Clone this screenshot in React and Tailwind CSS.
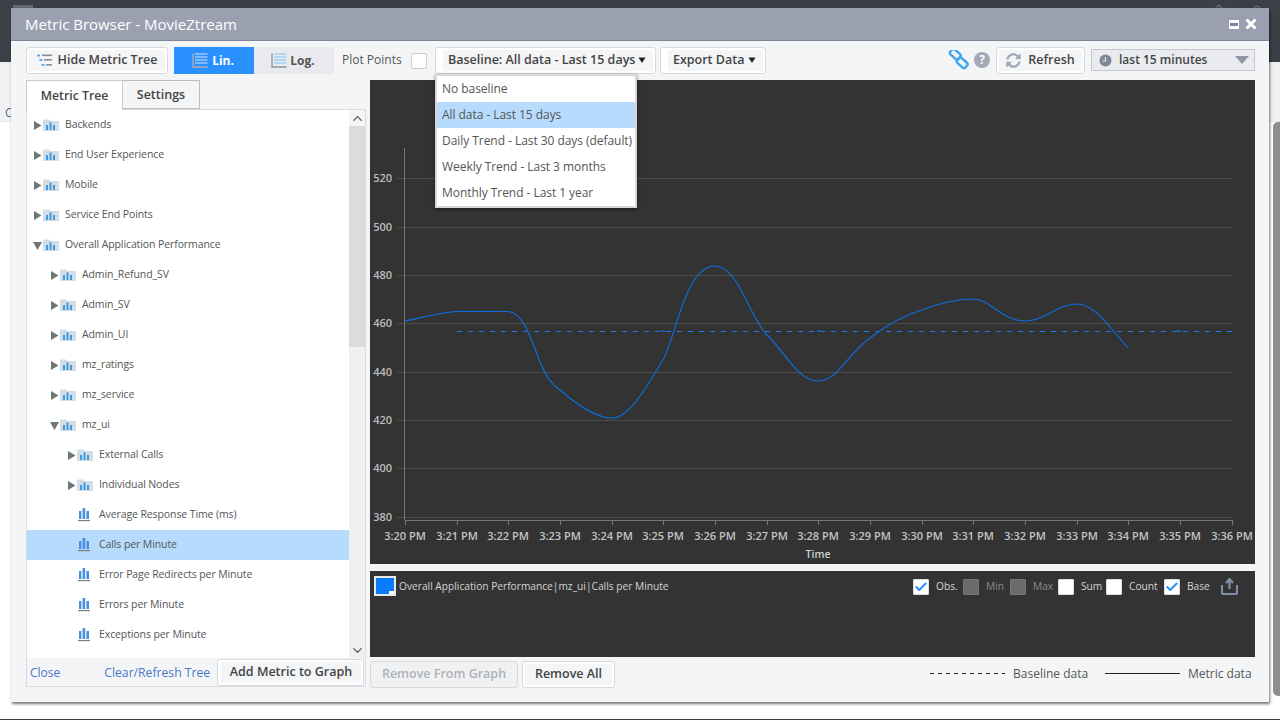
import React from 'react';
import { ChevronUp, ChevronDown, Check, Settings, User } from 'lucide-react';
import { FaSyncAlt } from 'react-icons/fa';

const font = { fontFamily: '"Open Sans", "Noto Sans", sans-serif' };

const levelPad = { 0: 'pl-[6px]', 1: 'pl-[23px]', 2: 'pl-[40px]', 3: 'pl-[51px]' };

const treeRows = [
  { label: 'Backends', level: 0, type: 'closed' },
  { label: 'End User Experience', level: 0, type: 'closed' },
  { label: 'Mobile', level: 0, type: 'closed' },
  { label: 'Service End Points', level: 0, type: 'closed' },
  { label: 'Overall Application Performance', level: 0, type: 'open' },
  { label: 'Admin_Refund_SV', level: 1, type: 'closed' },
  { label: 'Admin_SV', level: 1, type: 'closed' },
  { label: 'Admin_UI', level: 1, type: 'closed' },
  { label: 'mz_ratings', level: 1, type: 'closed' },
  { label: 'mz_service', level: 1, type: 'closed' },
  { label: 'mz_ui', level: 1, type: 'open' },
  { label: 'External Calls', level: 2, type: 'closed' },
  { label: 'Individual Nodes', level: 2, type: 'closed' },
  { label: 'Average Response Time (ms)', level: 3, type: 'leaf' },
  { label: 'Calls per Minute', level: 3, type: 'leaf', selected: true },
  { label: 'Error Page Redirects per Minute', level: 3, type: 'leaf' },
  { label: 'Errors per Minute', level: 3, type: 'leaf' },
  { label: 'Exceptions per Minute', level: 3, type: 'leaf' },
];

const baselineOptions = [
  'No baseline',
  'All data - Last 15 days',
  'Daily Trend - Last 30 days (default)',
  'Weekly Trend - Last 3 months',
  'Monthly Trend - Last 1 year',
];

const yTicks = [
  [520, 178], [500, 227], [480, 275], [460, 323],
  [440, 372], [420, 420], [400, 468], [380, 517],
];

const xTicks = [
  ['3:20 PM', 405], ['3:21 PM', 457], ['3:22 PM', 508], ['3:23 PM', 560],
  ['3:24 PM', 612], ['3:25 PM', 663], ['3:26 PM', 715], ['3:27 PM', 767],
  ['3:28 PM', 818], ['3:29 PM', 870], ['3:30 PM', 922], ['3:31 PM', 973],
  ['3:32 PM', 1025], ['3:33 PM', 1077], ['3:34 PM', 1128], ['3:35 PM', 1180],
  ['3:36 PM', 1232],
];

const legendItems = [
  { label: 'Obs.', width: 'w-[50px]', checked: true },
  { label: 'Min', width: 'w-[47px]', disabled: true },
  { label: 'Max', width: 'w-[48px]', disabled: true },
  { label: 'Sum', width: 'w-[48px]' },
  { label: 'Count', width: 'w-[58px]' },
  { label: 'Base', width: 'w-[56px]', checked: true },
];

const curve =
  'M405 321 C425 317 442 312 457 311.5 L508 311.5 C522 312 530 335 540 362 C547 378 552 385 560 390 C575 403 595 418 612 418 C630 418 648 384 663 360 C675 340 685 266 715 266 C738 266 750 318 767 335 C785 352 798 381 818 381 C838 381 848 353 870 338 C888 324 905 315 922 310 C940 303 958 299 973 299 C990 299 1002 321 1025 321 C1045 321 1058 304 1077 304 C1095 304 1110 328 1128 348';

function Arrow({ open }) {
  return open ? (
    <svg width="9" height="9" viewBox="0 0 9 9" className="shrink-0">
      <path d="M0 1 H9 L4.5 9 Z" fill="#6f7676" />
    </svg>
  ) : (
    <svg width="9" height="9" viewBox="0 0 9 9" className="shrink-0">
      <path d="M1 0 V9 L8.5 4.5 Z" fill="#6f7676" />
    </svg>
  );
}

function FolderIcon() {
  return (
    <svg width="16" height="12" viewBox="0 0 16 12" className="shrink-0">
      <path d="M0 1.5 Q0 0.5 1 0.5 H6 L7.5 2 H16 V12 H0 Z" fill="#d3dde6" />
      <rect x="3" y="6" width="2" height="5" fill="#3b9ae1" />
      <rect x="6.5" y="3.5" width="2" height="7.5" fill="#3b9ae1" />
      <rect x="10" y="6" width="2" height="5" fill="#3b9ae1" />
    </svg>
  );
}

function BarsIcon() {
  return (
    <svg width="12" height="14" viewBox="0 0 12 14" className="shrink-0">
      <rect x="1" y="3" width="2.4" height="8" fill="#4a90e2" />
      <rect x="4.6" y="0" width="2.6" height="11" fill="#4a90e2" />
      <rect x="8.4" y="3" width="2.6" height="8" fill="#4a90e2" />
      <rect x="0" y="12" width="12" height="1.2" fill="#7b8087" />
    </svg>
  );
}

function ScaleIcon({ line, frame }) {
  return (
    <svg width="16" height="15" viewBox="0 0 16 15" className="shrink-0">
      <path d="M1 0.5 V14 H15.5" fill="none" stroke={frame} strokeWidth="1.8" />
      <path d="M3 1 H15.5 M3 4 H15.5 M3 7 H15.5 M3 10 H15.5" fill="none" stroke={line} strokeWidth="1" />
    </svg>
  );
}

function TreeListIcon() {
  return (
    <svg width="15" height="13" viewBox="0 0 15 13" className="shrink-0">
      <rect x="0" y="0.5" width="3" height="2" fill="#5aaef5" />
      <rect x="5" y="0.5" width="10" height="1.6" fill="#8a8f97" />
      <rect x="2.5" y="5" width="3" height="2" fill="#5aaef5" />
      <rect x="7" y="5" width="8" height="1.6" fill="#8a8f97" />
      <rect x="4.5" y="10" width="3" height="2" fill="#5aaef5" />
      <rect x="9" y="10" width="6" height="1.6" fill="#8a8f97" />
    </svg>
  );
}

function Caret() {
  return (
    <svg width="10" height="7" viewBox="0 0 10 7" className="shrink-0">
      <path d="M1.5 0.5 H8.5 L5 6 Z" fill="#222" />
    </svg>
  );
}

function ToolButton({ className, children, gap = 'gap-[5px]' }) {
  return (
    <div className={`h-[27px] flex items-center justify-center border border-[#d6d9dd] rounded-[3px] bg-white p-[2px] ${className}`}>
      <div className={`w-full h-full flex items-center justify-center ${gap} bg-[#f3f5f7] rounded-[2px] text-[12.5px] font-semibold text-[#444] whitespace-nowrap`}>
        {children}
      </div>
    </div>
  );
}

function TreeRow({ row }) {
  return (
    <div className={`h-[30px] flex items-center shrink-0 ${levelPad[row.level]} ${row.selected ? 'bg-[#b7dbfd]' : ''}`}>
      {row.type === 'leaf' ? (
        <>
          <BarsIcon />
          <span className="ml-[9px] text-[10.5px] tracking-[-0.1px] text-[#555]">{row.label}</span>
        </>
      ) : (
        <>
          <Arrow open={row.type === 'open'} />
          <span className="ml-[1px]"><FolderIcon /></span>
          <span className="ml-[6px] text-[10.5px] tracking-[-0.1px] text-[#555]">{row.label}</span>
        </>
      )}
    </div>
  );
}

function LegendBox({ checked, disabled }) {
  return (
    <span className={`w-4 h-4 shrink-0 flex items-center justify-center rounded-[1px] border ${disabled ? 'bg-[#6b6b6b] border-[#777]' : 'bg-white border-[#ddd]'}`}>
      {checked && <Check size={14} strokeWidth={3.5} className="text-[#2a8fff]" />}
    </span>
  );
}

function Chart() {
  return (
    <svg width="885" height="484" viewBox="370 80 885 484" className="block">
      <rect x="370" y="80" width="885" height="484" fill="#333333" />
      {yTicks.map(([label, y]) => (
        <g key={label}>
          <line x1="397" x2="1232" y1={y + 0.5} y2={y + 0.5} stroke="#4d4d4d" />
          <text x="392" y={y + 3.5} textAnchor="end" fontSize="11" fontWeight="600" fill="#bdbdbd">{label}</text>
        </g>
      ))}
      <line x1="404.5" x2="404.5" y1="148" y2="520" stroke="#777" />
      <line x1="405" x2="1232" y1="520.5" y2="520.5" stroke="#777" />
      {xTicks.map(([label, x]) => (
        <g key={label}>
          <line x1={x + 0.5} x2={x + 0.5} y1="520" y2="525" stroke="#777" />
          <text x={x} y="540" textAnchor="middle" fontSize="11" fontWeight="600" fill="#c4c4c4">{label}</text>
        </g>
      ))}
      <text x="818" y="558" textAnchor="middle" fontSize="10.5" fontWeight="600" fill="#d0d0d0">Time</text>
      <line x1="457" x2="1232" y1="331.5" y2="331.5" stroke="#1a78e6" strokeDasharray="5 6" />
      <rect x="661" y="330" width="4" height="2" fill="#1c5ca8" />
      <rect x="817" y="330" width="4" height="2" fill="#1c5ca8" />
      <rect x="1177" y="330" width="4" height="2" fill="#1c5ca8" />
      <path d={curve} fill="none" stroke="#0b70e3" strokeWidth="1.1" />
    </svg>
  );
}

export default function App() {
  return (
    <div className="relative w-[1280px] h-[720px] overflow-hidden bg-white" style={font}>
      {/* page behind the dialog: only the top of the header peeks out */}
      <div className="h-[62px] bg-[#3c3f48]">
        <div className="h-[8px] overflow-hidden flex items-start pt-[4px] pl-[13px] pr-[14px] text-[#666973]">
          <div className="w-[20px] h-[3px] mt-[1px] bg-[#666973]" />
          <span className="ml-[18px] text-[27px] leading-[30px] tracking-[1px]">APPDYNAMICS</span>
          <span className="ml-auto text-[20px] leading-[22px] font-bold">?</span>
          <Settings size={18} className="ml-[25px]" />
          <User size={18} className="ml-[20px]" />
        </div>
      </div>
      <div className="h-[60px] bg-[#f0f1f3] border-b border-[#e4e6e9]" />
      <div className="absolute left-[5px] top-[104px] text-[12px] text-[#5a6a8a]">C</div>
      <div className="absolute right-0 top-[122px] w-[7px] h-[574px] bg-[#8e8e8e] rounded-l-[5px]" />
      <div className="absolute left-0 right-0 bottom-0 h-[1px] bg-[#3c3f48]" />

      {/* dialog */}
      <div className="absolute left-[11px] top-[8px] w-[1258px] h-[694px] flex flex-col bg-[#f3f5f7] shadow-[1px_2px_3px_rgba(0,0,0,0.55)] rounded-t-[2px]">
        <div className="h-[33px] shrink-0 flex items-center justify-between pl-[14px] pr-[12px] bg-[#9aa0b0] border-b border-[#7f8596]">
          <span className="mt-[1px] text-[15px] text-white">Metric Browser - MovieZtream</span>
          <div className="flex items-center gap-[6px]">
            <span className="w-[10px] h-[9px] bg-white flex items-center justify-center">
              <span className="w-[8px] h-[3px] bg-[#7f8596]" />
            </span>
            <svg width="12" height="12" viewBox="0 0 12 12">
              <path d="M1.5 1.5 L10.5 10.5 M10.5 1.5 L1.5 10.5" stroke="#fff" strokeWidth="3" />
            </svg>
          </div>
        </div>

        {/* toolbar */}
        <div className="h-[39px] shrink-0 flex items-start pt-[6px] pl-[15px] pr-[14px]">
          <ToolButton className="w-[142px]">
            <TreeListIcon />
            <span className="ml-[1px]">Hide Metric Tree</span>
          </ToolButton>
          <div className="ml-[6px] w-[80px] h-[27px] flex items-center justify-center gap-[4px] pr-[2px] bg-[#2a8fff] text-[12px] font-bold text-white">
            <ScaleIcon line="#d5e8ff" frame="#8fa4bf" />
            Lin.
          </div>
          <div className="w-[80px] h-[27px] flex items-center justify-center gap-[3px] pr-[2px] bg-[#e8eaed] text-[12px] font-bold text-[#555]">
            <ScaleIcon line="#7cc0fb" frame="#a5abb5" />
            Log.
          </div>
          <span className="ml-[8px] h-[26px] flex items-center text-[12px] text-[#555]">Plot Points</span>
          <span className="ml-[9px] mt-[6px] w-4 h-4 bg-white border border-[#c9ccd1] rounded-[2px]" />
          <ToolButton className="ml-[8px] w-[221px] pl-[7px]" gap="gap-[2px]">
            Baseline: All data - Last 15 days
            <Caret />
          </ToolButton>
          <ToolButton className="ml-[4px] w-[106px] pl-[7px]" gap="gap-[3px]">
            Export Data
            <Caret />
          </ToolButton>
          <div className="ml-auto flex items-start">
            <svg width="21" height="20" viewBox="0 0 21 20" className="mt-[3px]">
              <g fill="none" stroke="#3ea6f5" strokeWidth="2.4">
                <rect x="1.8" y="-1.5" width="11" height="6.5" rx="2" transform="rotate(42 4 3)" />
                <rect x="8.5" y="9.5" width="11" height="6.5" rx="2" transform="rotate(42 14 13)" />
              </g>
            </svg>
            <span className="ml-[5px] mt-[5px] w-4 h-4 rounded-full bg-[#a3a9b5] flex items-center justify-center text-[12px] font-bold leading-none text-white">?</span>
            <ToolButton className="ml-[6px] w-[89px]">
              <FaSyncAlt size={15} className="text-[#a3a9b5] mr-[2px]" />
              Refresh
            </ToolButton>
            <div className="ml-[6px] mt-[2px] w-[164px] h-[22px] flex items-center pl-[7px] pr-[5px] bg-[#e9ebee] border border-[#c3c7cc]">
              <svg width="13" height="13" viewBox="0 0 13 13" className="shrink-0">
                <circle cx="6.5" cy="6.5" r="6" fill="#7f8694" />
                <path d="M6.5 3 V7 H3.5" fill="none" stroke="#e9ebee" strokeWidth="1.2" />
              </svg>
              <span className="ml-[7px] text-[12px] font-semibold text-[#444]">last 15 minutes</span>
              <svg width="14" height="8" viewBox="0 0 14 8" className="ml-auto">
                <path d="M0 0 H14 L7 8 Z" fill="#8d94a3" />
              </svg>
            </div>
          </div>
        </div>

        {/* main columns */}
        <div className="flex-1 flex pl-[15px] pr-[14px] gap-[4px] min-h-0">
          <div className="w-[340px] shrink-0 flex flex-col">
            <div className="h-[29px] shrink-0 flex items-start relative z-10">
              <div className="w-[97px] h-[30px] pt-[2px] flex items-center justify-center bg-white border border-[#c8cbd0] border-b-0 text-[12.3px] font-semibold text-[#444]">Metric Tree</div>
              <div className="w-[77px] h-[29px] pt-[2px] flex items-center justify-center bg-[#f3f5f7] border border-[#b9bcc1] border-l-0 text-[12.5px] font-semibold text-[#444]">Settings</div>
            </div>
            <div className="flex-1 flex flex-col bg-white border border-[#d8dbdf] mb-[15px] min-h-0">
              <div className="h-[548px] shrink-0 flex">
                <div className="flex-1 flex flex-col overflow-hidden">
                  {treeRows.map((row) => (
                    <TreeRow key={row.label} row={row} />
                  ))}
                </div>
                <div className="w-[16px] shrink-0 flex flex-col bg-[#f0f0f0]">
                  <div className="h-[16px] flex items-center justify-center bg-[#f5f5f5]">
                    <ChevronUp size={15} className="text-[#555]" />
                  </div>
                  <div className="h-[221px] bg-[#dcdcdc]" />
                  <div className="mt-auto h-[16px] flex items-center justify-center">
                    <ChevronDown size={15} className="text-[#555]" />
                  </div>
                </div>
              </div>
              <div className="flex-1 flex items-center bg-[#f3f5f7] pl-[3px] pr-[1px]">
                <span className="mt-[1px] text-[12px] text-[#4a76c9]">Close</span>
                <span className="ml-[44px] mt-[2px] text-[12.2px] text-[#4a76c9]">Clear/Refresh Tree</span>
                <ToolButton className="ml-auto mt-[1px] w-[147px] pl-[3px]">Add Metric to Graph</ToolButton>
              </div>
            </div>
          </div>

          <div className="flex-1 flex flex-col min-w-0">
            <Chart />
            <div className="mt-[7px] h-[86px] shrink-0 bg-[#333333] flex items-start pt-[5px] pl-[4px] pr-[16px]">
              <span className="relative w-[22px] h-[20px] bg-[#0a7bff] border-2 border-[#e6e8ea] shrink-0">
                <span className="absolute right-0 bottom-0 w-[5px] h-[3px] bg-white" />
              </span>
              <span className="ml-[3px] mt-[3px] text-[10.2px] text-[#d4d4d4]">Overall Application Performance|mz_ui|Calls per Minute</span>
              <div className="ml-auto mt-[2px] flex items-center text-[10.2px] text-[#d4d4d4]">
                {legendItems.map((item) => (
                  <div key={item.label} className={`flex items-center ${item.width}`}>
                    <LegendBox checked={item.checked} disabled={item.disabled} />
                    <span className={`ml-[7px] ${item.disabled ? 'text-[#8a8a8a]' : ''}`}>{item.label}</span>
                  </div>
                ))}
                <svg width="19" height="17" viewBox="0 0 19 17">
                  <path d="M2 7 V15 Q2 16 3 16 H16 Q17 16 17 15 V7" fill="none" stroke="#8090a8" strokeWidth="2" />
                  <path d="M9.5 11 V3 M6 5 L9.5 1 L13 5" fill="none" stroke="#8090a8" strokeWidth="2.2" />
                </svg>
              </div>
            </div>
            <div className="mt-[4px] flex items-center">
              <div className="w-[148px] h-[27px] flex items-center justify-center border border-[#d6d9dd] rounded-[3px] text-[12.5px] font-semibold text-[#aeb1b5] bg-[#f0f1f3]">Remove From Graph</div>
              <ToolButton className="ml-[4px] w-[93px]">Remove All</ToolButton>
              <svg width="75" height="1" viewBox="0 0 75 1" className="ml-auto mb-[2px]">
                <line x1="0" x2="75" y1="0.5" y2="0.5" stroke="#222" strokeDasharray="4 4" />
              </svg>
              <span className="ml-[8px] w-[74px] mb-[2px] text-[12px] text-[#555] whitespace-nowrap">Baseline data</span>
              <svg width="75" height="1" viewBox="0 0 75 1" className="ml-[18px] mb-[2px]">
                <line x1="0" x2="75" y1="0.5" y2="0.5" stroke="#222" />
              </svg>
              <span className="ml-[8px] mr-[3px] w-[64px] mb-[2px] text-[12px] text-[#555] whitespace-nowrap">Metric data</span>
            </div>
          </div>
        </div>

        {/* baseline menu */}
        <div className="absolute left-[424px] top-[66px] w-[202px] flex flex-col bg-white border-2 border-[#d8d8d8] shadow-[0_1px_3px_rgba(0,0,0,0.5)] z-20">
          {baselineOptions.map((opt, i) => (
            <div key={opt} className={`h-[26px] flex items-center pl-[5px] text-[12px] tracking-[-0.05px] text-[#555] whitespace-nowrap ${i === 1 ? 'bg-[#b7dbfd]' : ''}`}>
              {opt}
            </div>
          ))}
        </div>
      </div>
    </div>
  );
}
